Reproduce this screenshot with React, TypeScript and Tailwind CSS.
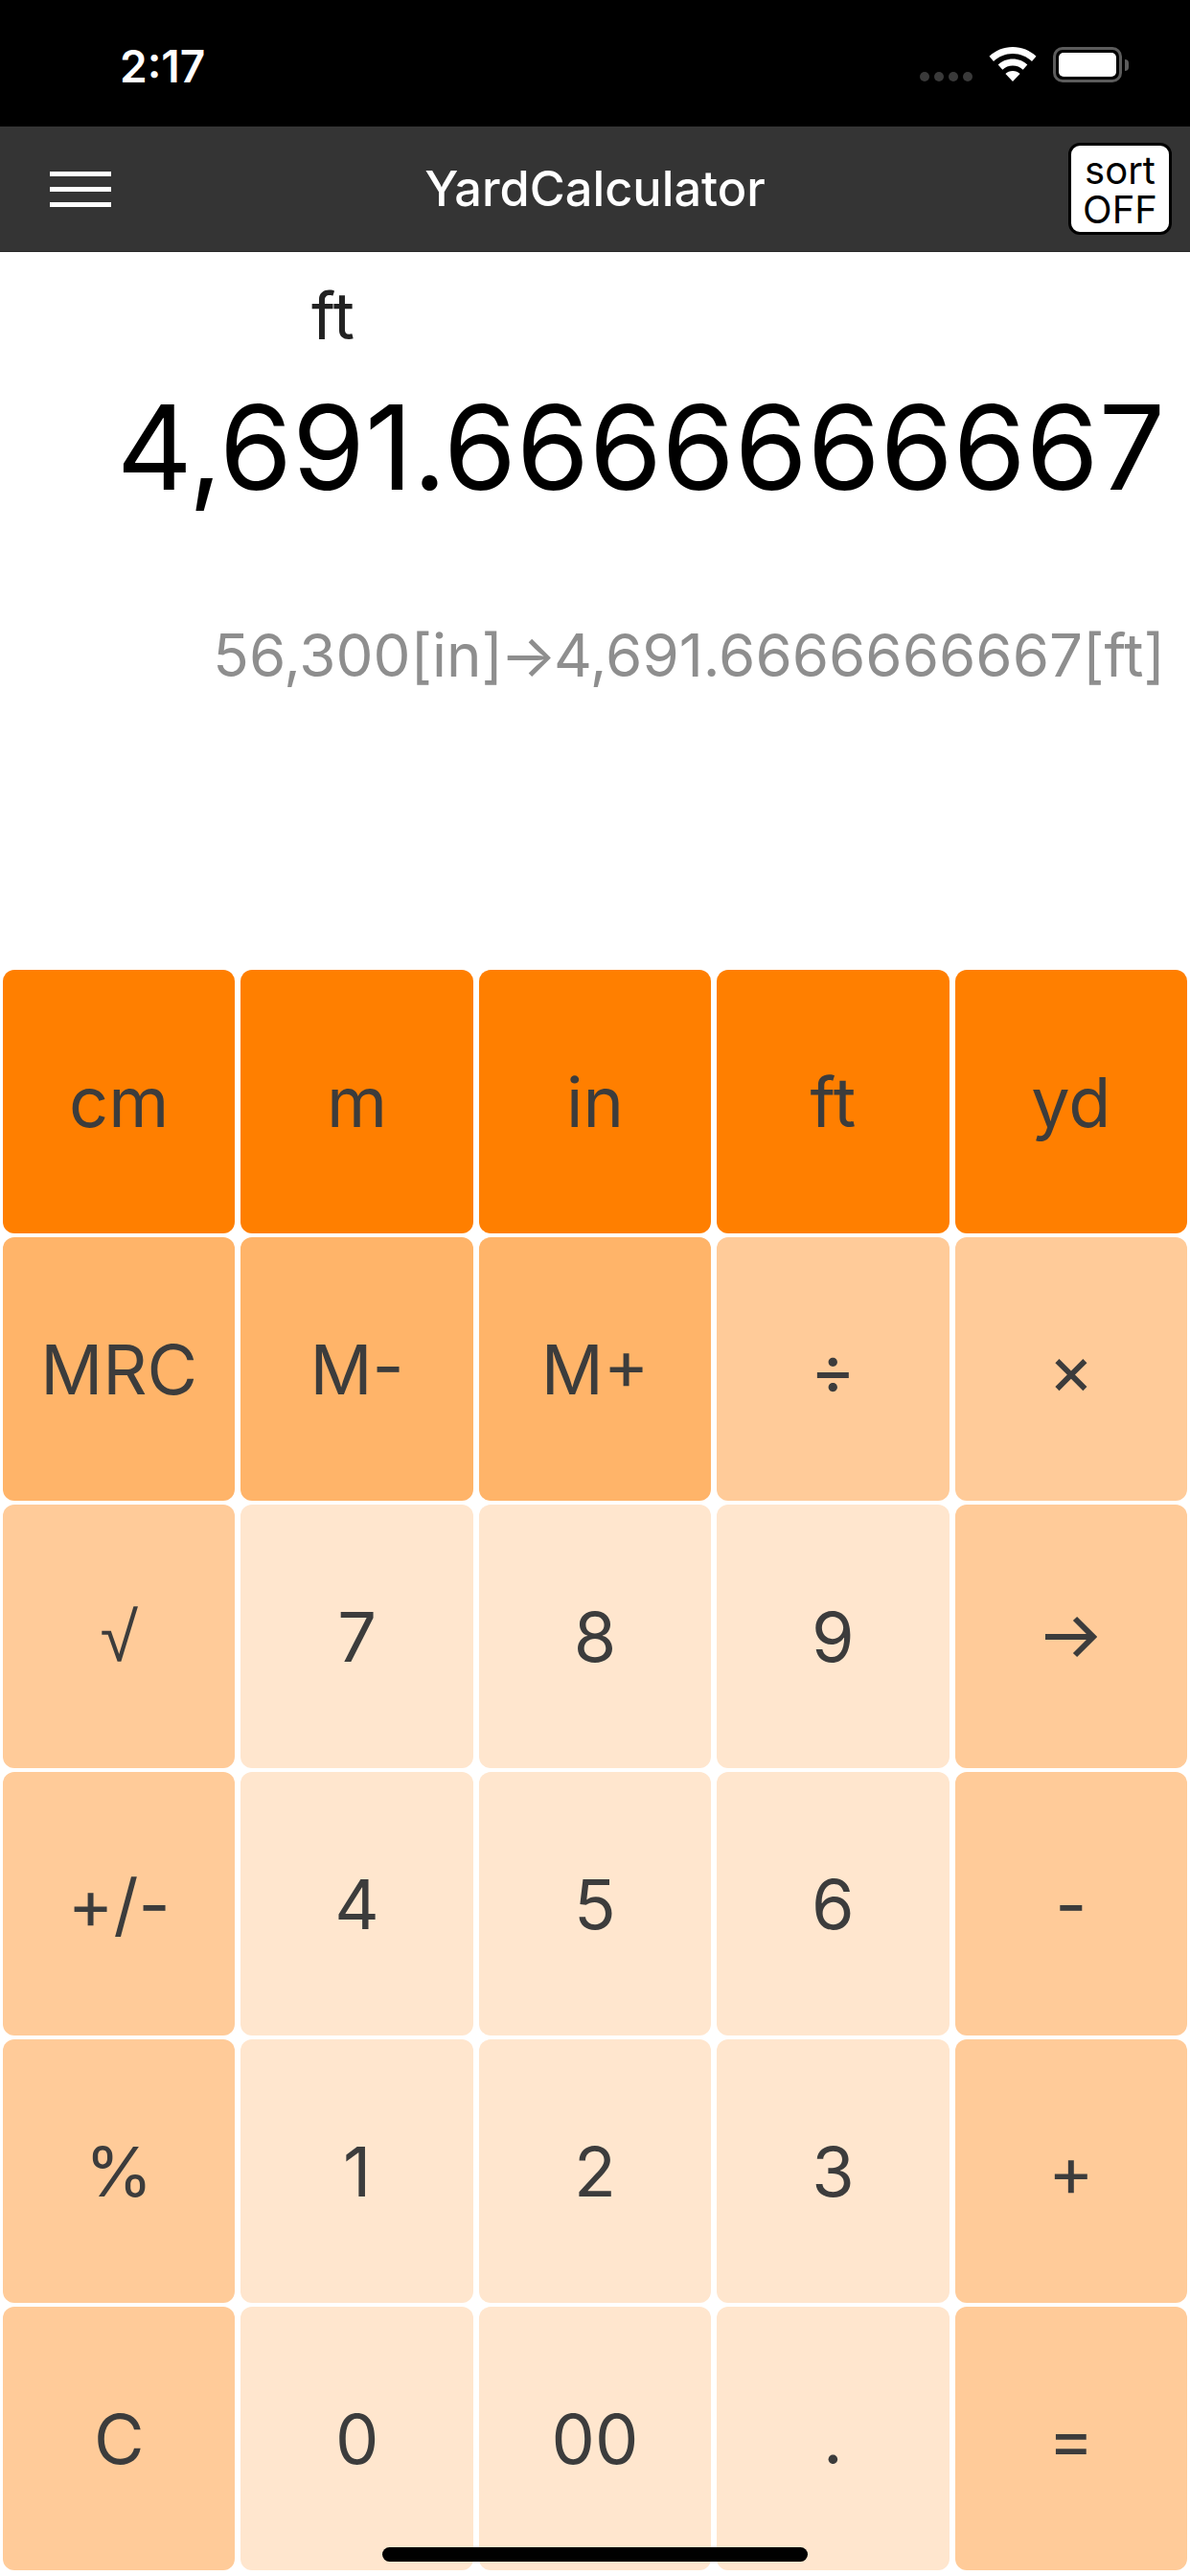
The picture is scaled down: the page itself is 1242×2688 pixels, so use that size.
const keys = [
  { label: "cm", tone: "bg-[#ff7f00]" },
  { label: "m", tone: "bg-[#ff7f00]" },
  { label: "in", tone: "bg-[#ff7f00]" },
  { label: "ft", tone: "bg-[#ff7f00]" },
  { label: "yd", tone: "bg-[#ff7f00]" },
  { label: "MRC", tone: "bg-[#ffb469]" },
  { label: "M-", tone: "bg-[#ffb469]" },
  { label: "M+", tone: "bg-[#ffb469]" },
  { label: "÷", tone: "bg-[#ffcb99]" },
  { label: "×", tone: "bg-[#ffcb99]" },
  { label: "√", tone: "bg-[#ffcb99]" },
  { label: "7", tone: "bg-[#ffe6ce]" },
  { label: "8", tone: "bg-[#ffe6ce]" },
  { label: "9", tone: "bg-[#ffe6ce]" },
  { label: "→", tone: "bg-[#ffcb99]" },
  { label: "+/-", tone: "bg-[#ffcb99]" },
  { label: "4", tone: "bg-[#ffe6ce]" },
  { label: "5", tone: "bg-[#ffe6ce]" },
  { label: "6", tone: "bg-[#ffe6ce]" },
  { label: "-", tone: "bg-[#ffcb99]" },
  { label: "%", tone: "bg-[#ffcb99]" },
  { label: "1", tone: "bg-[#ffe6ce]" },
  { label: "2", tone: "bg-[#ffe6ce]" },
  { label: "3", tone: "bg-[#ffe6ce]" },
  { label: "+", tone: "bg-[#ffcb99]" },
  { label: "C", tone: "bg-[#ffcb99]" },
  { label: "0", tone: "bg-[#ffe6ce]" },
  { label: "00", tone: "bg-[#ffe6ce]" },
  { label: ".", tone: "bg-[#ffe6ce]" },
  { label: "=", tone: "bg-[#ffcb99]" },
];

function StatusBar() {
  return (
    <div className="flex h-[132px] items-start justify-between bg-black text-white">
      <span className="ml-[125px] mt-[42px] text-[46px] leading-[54px] font-semibold">2:17</span>
      <div className="mr-[64px] mt-[49px] flex items-start">
        {/* signal dots */}
        <div className="mt-[26px] flex gap-[5px]">
          <span className="h-[10px] w-[10px] rounded-full bg-[#3a3a3a]" />
          <span className="h-[10px] w-[10px] rounded-full bg-[#3a3a3a]" />
          <span className="h-[10px] w-[10px] rounded-full bg-[#3a3a3a]" />
          <span className="h-[10px] w-[10px] rounded-full bg-[#3a3a3a]" />
        </div>
        <svg className="ml-[17px]" width="50" height="36" viewBox="0 0 50 36">
          <path d="M25 0C15.5 0 7 3.6 0.5 9.8L5 15C10.2 10 17.2 7 25 7s14.800 3 20 8l4.500-5.200C43 3.600 34.500 0 25 0z" fill="#fff" />
          <path d="M25 12.500c-6 0-11.300 2.300-15.300 6.100l4.600 5.100c2.800-2.600 6.600-4.200 10.700-4.200s7.900 1.600 10.700 4.200l4.600-5.100c-4-3.800-9.300-6.100-15.300-6.100z" fill="#fff" />
          <path d="M25 25c-3 0-5.600 1.100-7.600 3L25 36l7.600-8c-2-1.900-4.600-3-7.600-3z" fill="#fff" />
        </svg>
        <div className="ml-[17px] flex items-center">
          <div className="h-[37px] w-[72px] rounded-[10px] border-[3px] border-[#5c5c5c] p-[3px]">
            <div className="h-full w-full rounded-[5px] bg-white" />
          </div>
          <span className="ml-[3px] h-[12px] w-[4px] rounded-r-full bg-[#5c5c5c]" />
        </div>
      </div>
    </div>
  );
}

function NavBar() {
  return (
    <div className="flex h-[131px] items-center justify-between border-b border-b-[#2a2a2a] bg-[#343434]">
      <div className="ml-[52px] flex w-[64px] flex-col gap-[11px]">
        <span className="h-[5px] bg-white" />
        <span className="h-[5px] bg-white" />
        <span className="h-[5px] bg-white" />
      </div>
      <span className="ml-[11px] text-[50.5px] leading-[60px] font-medium text-white">YardCalculator</span>
      <div className="mr-[19px] flex h-[96px] w-[108px] flex-col items-center justify-center rounded-[12px] border-[3px] border-black bg-white pt-[2px] text-[40px] leading-[41px] text-black">
        <span>sort</span>
        <span>OFF</span>
      </div>
    </div>
  );
}

function Key({ label, tone }: { label: string; tone: string }) {
  return (
    <button className={`flex h-[275px] items-center justify-center rounded-[12px] text-[72px] text-[#3c3c3c] ${tone}`}>
      {label === "→" ? (
        <svg width="54" height="44" viewBox="0 0 54 44" fill="none" stroke="#3c3c3c" strokeWidth="6">
          <path d="M0 22h50M31 3l19 19-19 19" />
        </svg>
      ) : label === "√" ? (
        <span className="font-['Liberation_Sans',sans-serif]">{label}</span>
      ) : (
        label
      )}
    </button>
  );
}

export default function App() {
  return (
    <div className="relative flex h-[2688px] w-[1242px] flex-col overflow-hidden bg-white font-['Inter',sans-serif]">
      <StatusBar />
      <NavBar />
      <div className="flex h-[749px] flex-col">
        <div className="pl-[325px] pt-[28px] text-[68px] leading-[76px] text-[#222]">ft</div>
        <div className="mt-[25px] pr-[26px] text-right text-[122.500px] leading-[150px] text-black">4,691.6666666667</div>
        <div className="mt-[105px] pr-[26px] text-right text-[61.800px] leading-[74px] text-[#8e8e8e]">
          56,300[in]<span className="mx-[-3px]">→</span>4,691.6666666667[ft]
        </div>
      </div>
      <div className="grid grid-cols-5 gap-x-[6px] gap-y-[4px] px-[3px]">
        {keys.map((key) => (
          <Key key={key.label} label={key.label} tone={key.tone} />
        ))}
      </div>
      {/* home indicator */}
      <div className="absolute bottom-[15px] left-[399px] h-[15px] w-[444px] rounded-full bg-black" />
    </div>
  );
}
